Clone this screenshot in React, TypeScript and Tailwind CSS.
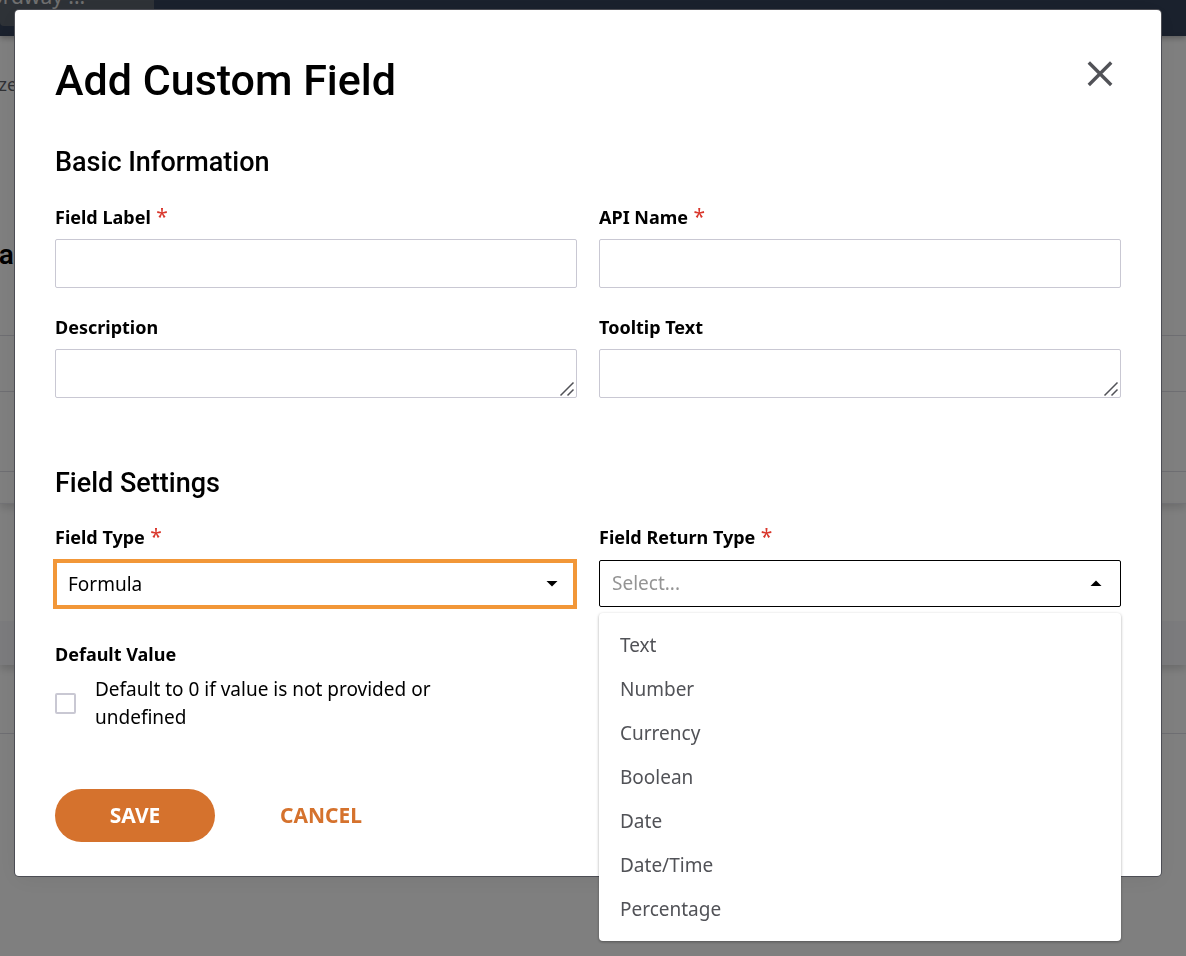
import { useState } from "react"
import type { ReactNode } from "react"

const RETURN_TYPES = ["Text", "Number", "Currency", "Boolean", "Date", "Date/Time", "Percentage"]

const FIELD_TYPES = ["Formula", "Text", "Number", "Date"]

export default function App() {
  return (
    <div className="relative min-h-screen overflow-hidden bg-white font-['Noto_Sans',sans-serif] text-black">
      <PageBehind />
      {/* Dimmed backdrop */}
      <div className="fixed inset-0 bg-black/50">
        <CustomFieldDialog />
      </div>
    </div>
  )
}

function PageBehind() {
  return (
    <div aria-hidden="true" className="flex min-h-screen flex-col">
      <header className="flex h-9 shrink-0 items-start bg-[#34425a] shadow-[0_2px_6px_rgba(0,0,0,0.3)]">
        <div className="flex h-[26px] w-[154px] items-end overflow-hidden rounded-b bg-[#5c646e] text-[21px] leading-9 text-[#e0e0e0]">
          <span className="-ml-2.5 whitespace-nowrap pb-3">ordway ...</span>
        </div>
      </header>
      <section className="flex h-[468px] shrink-0 flex-col border-b border-[#e9e9ef] shadow-[0_4px_8px_rgba(0,0,0,0.14)]">
        <div className="h-[201px] pt-9">
          <span className="-ml-4 block text-lg leading-6 text-[#63646a]">Size</span>
        </div>
        <div className="flex h-[99px] border-b border-[#dcdce4]">
          <span className="-ml-11 font-['Roboto',sans-serif] text-[28px] leading-9 font-semibold">Data</span>
        </div>
        <div className="h-14 border-b border-[#dcdce4]" />
        <div className="h-20 border-b border-[#dcdce4]" />
      </section>
      <section className="flex h-[161px] shrink-0 flex-col justify-end shadow-[0_4px_8px_rgba(0,0,0,0.16)]">
        <div className="h-11 bg-[#f7f7fa]" />
      </section>
      <section className="h-[69px] shrink-0 border-b border-[#dcdce4]" />
    </div>
  )
}

function CustomFieldDialog() {
  const [fieldType, setFieldType] = useState("Formula")
  const [returnType, setReturnType] = useState("")

  return (
    <form
      role="dialog"
      aria-labelledby="dialog-title"
      className="mt-2.5 mr-[25px] ml-[15px] rounded bg-white px-10 pt-11 pb-[34px] shadow-[0_4px_24px_rgba(0,0,0,0.06)] ring-1 ring-[#4c4d54]"
      onSubmit={(e) => e.preventDefault()}
    >
      <div className="flex items-start justify-between">
        <h1 id="dialog-title" className="font-['Roboto',sans-serif] text-[43px] leading-[52px] font-medium">
          Add Custom Field
        </h1>
        <button type="button" aria-label="Close" className="mr-2 flex size-10 items-center justify-end text-[#515257]">
          <svg className="size-[26px]" viewBox="0 0 26 26" fill="none" stroke="currentColor" strokeWidth="3.4">
            <path d="M1.8 1.500 24.2 24M24.2 1.500 1.800 24" />
          </svg>
        </button>
      </div>

      {/* Basic information */}
      <SectionTitle className="mt-10">Basic Information</SectionTitle>
      <div className="mt-[25px] grid grid-cols-2 gap-x-[22px] gap-y-[25px]">
        <Field id="field-label" label="Field Label" required>
          <input id="field-label" type="text" className="h-[49px] w-full rounded-xs border border-[#c9c8d3] px-3 text-[19px]" />
        </Field>
        <Field id="api-name" label="API Name" required>
          <input id="api-name" type="text" className="h-[49px] w-full rounded-xs border border-[#c9c8d3] px-3 text-[19px]" />
        </Field>
        <Field id="description" label="Description">
          <TextArea id="description" />
        </Field>
        <Field id="tooltip-text" label="Tooltip Text">
          <TextArea id="tooltip-text" />
        </Field>
      </div>

      {/* Field settings */}
      <SectionTitle className="mt-[69px]">Field Settings</SectionTitle>
      <div className="mt-6 grid grid-cols-2 gap-x-[22px]">
        <Field id="field-type" label="Field Type" required>
          <div className="relative">
            <select
              id="field-type"
              value={fieldType}
              onChange={(e) => setFieldType(e.target.value)}
              className="-ml-0.5 h-[50px] w-[calc(100%+2px)] appearance-none border-4 border-[#f29738] bg-white px-[11px] text-[19px]"
            >
              {FIELD_TYPES.map((type) => (
                <option key={type}>{type}</option>
              ))}
            </select>
            <Caret />
          </div>
        </Field>
        <Field id="return-type" label="Field Return Type" required>
          <div className="relative">
            <select
              id="return-type"
              value={returnType}
              onChange={(e) => setReturnType(e.target.value)}
              className="mt-px h-[47px] w-full appearance-none rounded-xs border border-black bg-white px-3 text-[19px] text-[#949494]"
            >
              <option value="">Select...</option>
              {RETURN_TYPES.map((type) => (
                <option key={type}>{type}</option>
              ))}
            </select>
            <Caret up />
            <ul
              role="listbox"
              aria-label="Field Return Type"
              className="absolute inset-x-0 top-[54px] z-10 rounded bg-white py-2.5 shadow-[0_1px_3px_rgba(0,0,0,0.35)]"
            >
              {RETURN_TYPES.map((type) => (
                <li
                  key={type}
                  role="option"
                  aria-selected={type === returnType}
                  className="cursor-pointer px-[21px] text-[19px] leading-[44px] text-[#515257]"
                  onClick={() => setReturnType(type)}
                >
                  {type}
                </li>
              ))}
            </ul>
          </div>
        </Field>
      </div>

      <div className="mt-[31px]">
        <h3 className="text-lg leading-7 font-bold">Default Value</h3>
        <div className="mt-[7px] flex items-center gap-[19px]">
          <input
            id="default-zero"
            type="checkbox"
            className="size-[21px] shrink-0 appearance-none rounded-xs border-2 border-[#c9c8d3] bg-white checked:bg-[#d5722d]"
          />
          <label htmlFor="default-zero" className="max-w-[360px] text-[19px] leading-7">
            Default to 0 if value is not provided or undefined
          </label>
        </div>
      </div>

      {/* Actions */}
      <div className="mt-[58px] flex items-center gap-[65px]">
        <button
          type="submit"
          className="h-[53px] w-40 rounded-full bg-[#d5722d] text-[21px] font-bold text-white"
        >
          SAVE
        </button>
        <button type="button" className="text-[21px] font-bold text-[#d5722d]">
          CANCEL
        </button>
      </div>
    </form>
  )
}

function SectionTitle({ className, children }: { className: string; children: ReactNode }) {
  return (
    <h2 className={`font-['Roboto',sans-serif] text-[27px] leading-8 font-medium ${className}`}>{children}</h2>
  )
}

function Field({
  id,
  label,
  required,
  children,
}: {
  id: string
  label: string
  required?: boolean
  children: ReactNode
}) {
  return (
    <div className="flex flex-col gap-2">
      <label htmlFor={id} className="text-lg leading-7 font-bold">
        {label}
        {required && <span className="text-[21px] leading-none font-normal text-[#d9362b]"> *</span>}
      </label>
      {children}
    </div>
  )
}

function TextArea({ id }: { id: string }) {
  return (
    <div className="relative h-[49px]">
      <textarea id={id} className="size-full resize-none rounded-xs border border-[#c9c8d3] px-3 py-2 text-[19px]" />
      {/* Resize grip */}
      <svg
        className="pointer-events-none absolute right-0.5 bottom-px size-4"
        viewBox="0 0 16 16"
        fill="none"
        stroke="#515257"
        strokeWidth="1.5"
      >
        <path d="M1.5 14.5 14.500 1.500M8.500 14.500 14.500 8.500" />
      </svg>
    </div>
  )
}

function Caret({ up }: { up?: boolean }) {
  return (
    <svg
      className="pointer-events-none absolute top-[21px] right-[19px] h-[7px] w-3"
      viewBox="0 0 12 7"
      fill="black"
    >
      <path d={up ? "M0.500 6 6 0.500 11.500 6Z" : "M0.500 1 6 6.500 11.500 1Z"} />
    </svg>
  )
}
